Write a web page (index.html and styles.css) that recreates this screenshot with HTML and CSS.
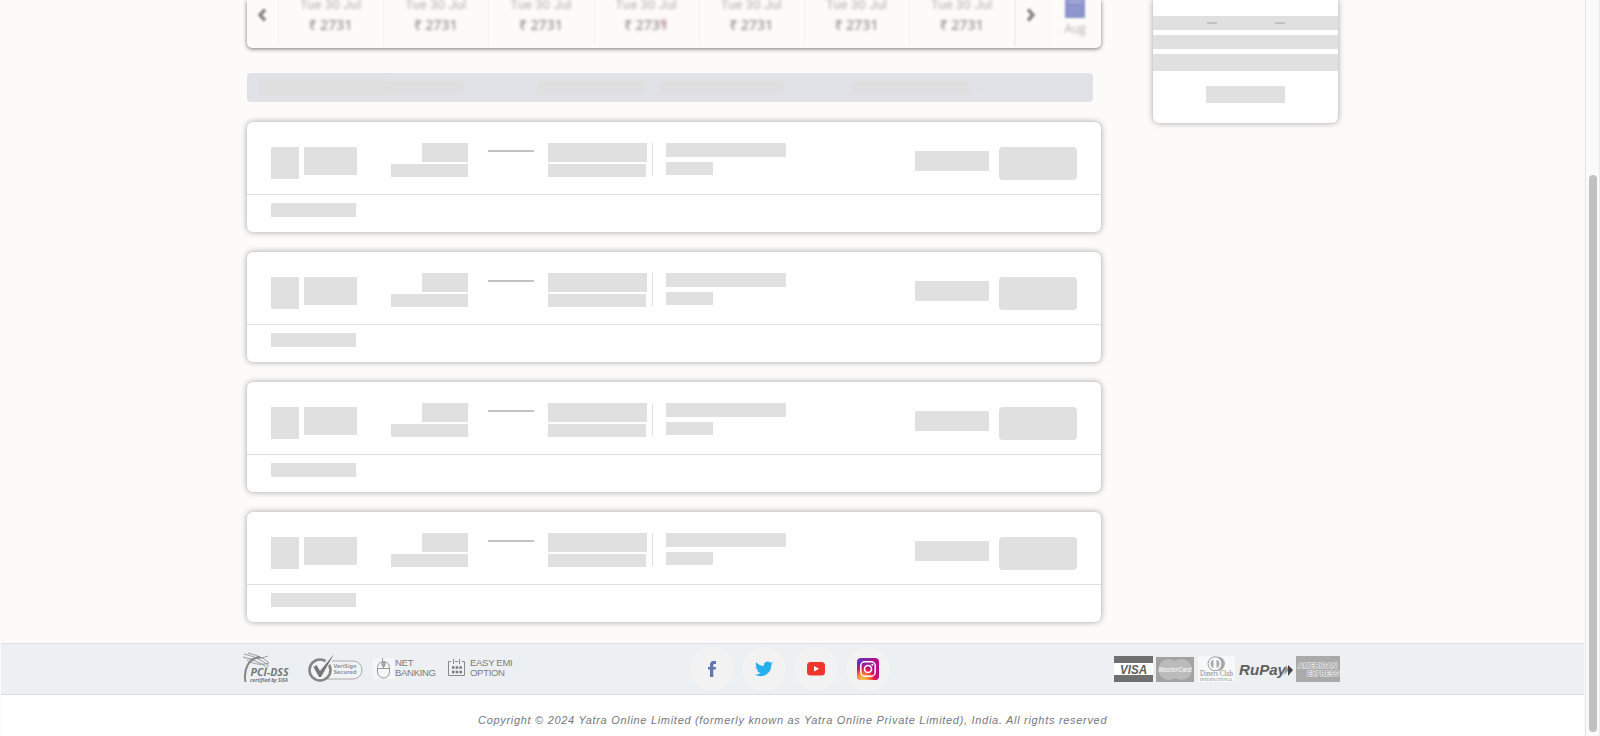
FILE: index.html
```html
<!DOCTYPE html>
<html lang="en">
<head>
<meta charset="utf-8">
<title>Yatra Flights</title>
<link rel="stylesheet" href="styles.css">
</head>
<body>
<div class="window">
  <div class="page">
    <div class="content">
      <main class="results">
        <section class="fares">
          <div class="arrow"><svg width="10" height="14" viewBox="0 0 10 14"><path d="M8 1.500 3 7l5 5.500" class="chev"/></svg></div>
          <div class="day"><span>Tue 30 Jul</span><b>₹ 2731</b></div>
          <div class="day"><span>Tue 30 Jul</span><b>₹ 2731</b></div>
          <div class="day"><span>Tue 30 Jul</span><b>₹ 2731</b></div>
          <div class="day low"><span>Tue 30 Jul</span><b>₹ 2731</b></div>
          <div class="day"><span>Tue 30 Jul</span><b>₹ 2731</b></div>
          <div class="day"><span>Tue 30 Jul</span><b>₹ 2731</b></div>
          <div class="day"><span>Tue 30 Jul</span><b>₹ 2731</b></div>
          <div class="arrow next"><svg width="10" height="14" viewBox="0 0 10 14"><path d="M2 1.500 7 7l-5 5.500" class="chev"/></svg></div>
          <div class="month"><svg width="20" height="22" viewBox="0 0 20 22"><path d="M0 3h20v19H0z" fill="#8c94cc"/><path d="M4 0v6M16 0v6" stroke="#8c94cc" stroke-width="3"/><path d="M3 6h14" stroke="#b4b9de" stroke-width="1.500"/><path d="M4 12h12M4 16h12" stroke="#959bd0" stroke-width="1.500"/></svg><span>Aug</span></div>
        </section>
        <section class="sort">
          <i class="s1"></i><i class="s2"></i><i class="s3"></i><i class="s4"></i><i class="s5"></i>
          <svg width="7" height="10" viewBox="0 0 7 10"><path d="M3.500 0v9M.5 6l3 3 3-3" fill="none" stroke="#dcdde0"/></svg>
        </section>
        <div class="cards">
          <article class="card">
            <div class="top"><i class="logo"></i><i class="name"></i><div class="dep"><i></i><i></i></div><i class="path"></i><div class="arr"><i></i><i></i></div><i class="rule"></i><div class="info"><i></i><i></i></div><i class="price"></i><i class="book"></i></div>
            <div class="bottom"><i></i></div>
          </article>
          <article class="card">
            <div class="top"><i class="logo"></i><i class="name"></i><div class="dep"><i></i><i></i></div><i class="path"></i><div class="arr"><i></i><i></i></div><i class="rule"></i><div class="info"><i></i><i></i></div><i class="price"></i><i class="book"></i></div>
            <div class="bottom"><i></i></div>
          </article>
          <article class="card">
            <div class="top"><i class="logo"></i><i class="name"></i><div class="dep"><i></i><i></i></div><i class="path"></i><div class="arr"><i></i><i></i></div><i class="rule"></i><div class="info"><i></i><i></i></div><i class="price"></i><i class="book"></i></div>
            <div class="bottom"><i></i></div>
          </article>
          <article class="card">
            <div class="top"><i class="logo"></i><i class="name"></i><div class="dep"><i></i><i></i></div><i class="path"></i><div class="arr"><i></i><i></i></div><i class="rule"></i><div class="info"><i></i><i></i></div><i class="price"></i><i class="book"></i></div>
            <div class="bottom"><i></i></div>
          </article>
        </div>
      </main>
      <aside class="side">
        <div class="row dashes"><i></i><i></i></div>
        <div class="row"></div>
        <div class="row tall"></div>
        <div class="button"></div>
      </aside>
    </div>
    <footer class="footer">
      <div class="trust">
        <svg class="pci" width="47" height="34" viewBox="0 0 47 34">
          <g fill="none" stroke="#868686"><path d="M2.500 30C0 17 6 6 17 5" stroke-width="2"/><path d="M1 2c9 2 18 6 25 12M0 5c9 2 18 6 25 11M5 1c8 2 16 5 21 10M4 8c7 5 16 5 22 3M6 7c8 0 14-1 19-3" stroke-width=".8"/></g>
          <text x="7.500" y="23.500" class="svgt bi" font-size="10" textLength="38" lengthAdjust="spacingAndGlyphs">PCI-DSS</text>
          <text x="7" y="30" class="svgt bi" font-size="5" textLength="38" lengthAdjust="spacingAndGlyphs">certified by SISA</text>
        </svg>
        <svg class="veri" width="56" height="30" viewBox="0 0 56 30">
          <path d="M20 8h25a8.500 8.500 0 0 1 0 18H19" fill="#f1f3f5" stroke="#aaa"/>
          <circle cx="12" cy="17" r="10.500" fill="#f3f4f5" stroke="#858585" stroke-width="2.600"/>
          <path d="m6.500 13 5 8L25 2" fill="none" stroke="#eef1f4" stroke-width="5"/><path d="M5.500 14 8.500 12l3.500 6L26 1 13 24h-2z" fill="#777"/>
          <text x="25.500" y="15" class="svgt vb" font-size="5.500" textLength="23" lengthAdjust="spacingAndGlyphs">VeriSign</text>
          <text x="25.500" y="20.500" class="svgt vb" font-size="5.500" textLength="23" lengthAdjust="spacingAndGlyphs">Secured</text>
        </svg>
        <svg class="mouse" width="21" height="21" viewBox="0 0 21 21"><path d="M0 0h21v21H0z" fill="#f4f6f7"/><g fill="none" stroke="#999"><rect x="4.500" y="3.500" width="12" height="16.500" rx="6"/><path d="M4.500 10.500h12M10.500 4v6M9.500 0v3"/><rect x="9" y="3.500" width="3" height="5" rx="1.500" fill="#aaa"/></g></svg>
        <span class="label net">NET<br>BANKING</span>
        <svg class="emi" width="18" height="19" viewBox="0 0 18 19"><path d="M3 3.500H.5v14h16v-14H14M5.500 1v5M11.500 1v5M7 3.500h3" fill="none" stroke="#888"/><path d="M4 9.500h10M4 14h10" stroke="#777" stroke-width="2.500" stroke-dasharray="2.500 1.200"/></svg>
        <span class="label">EASY EMI<br>OPTION</span>
      </div>
      <div class="social">
        <span><svg width="8" height="16" viewBox="0 0 8 16"><path d="M2 16V8.500H0V6h2V4Q2 0 5.500 0H8v3H6.500Q5.300 3 5.300 4V6H8l-.4 2.500H5.300V16z" fill="#6078ad"/></svg></span>
        <span><svg width="18" height="16" viewBox="0 0 24 20"><path d="M24 2.300c-.9.400-1.800.7-2.800.8 1-.6 1.800-1.600 2.200-2.700-1 .6-2 1-3.100 1.200A4.900 4.900 0 0 0 11.900 6C7.800 5.900 4.200 3.900 1.700.9.400 3.100 1 6 3.200 7.500 2.400 7.400 1.600 7.200 1 6.800c0 2.300 1.600 4.400 3.900 4.900-.7.200-1.500.2-2.200.1.600 2 2.400 3.400 4.600 3.400A9.900 9.900 0 0 1 0 17.200 14 14 0 0 0 21.500 4.800c1-.7 1.800-1.600 2.500-2.500z" fill="#27aeed"/></svg></span>
        <span><svg width="18" height="14" viewBox="0 0 18 14"><rect width="18" height="13.500" rx="3.500" fill="#f0352c"/><path d="m7 4 5 2.800-5 2.800z" fill="#fff"/></svg></span>
        <span><svg width="22" height="22" viewBox="0 0 22 22"><defs><linearGradient id="ig" x1="0" y1="0" x2="1" y2="0"><stop stop-color="#6133c0"/><stop offset="1" stop-color="#c10986"/></linearGradient><radialGradient id="ih" cx=".25" cy="1.050" r=".85"><stop stop-color="#ffd45b"/><stop offset=".35" stop-color="#fb8a35"/><stop offset=".65" stop-color="#e5164e"/><stop offset="1" stop-color="#c0087f" stop-opacity="0"/></radialGradient></defs><rect width="22" height="22" rx="4" fill="url(#ig)"/><rect width="22" height="22" rx="4" fill="url(#ih)"/><rect x="3.800" y="3.800" width="14.400" height="14.400" rx="4" fill="none" stroke="#fff" stroke-width="1.500"/><circle cx="11" cy="11" r="3.500" fill="none" stroke="#fff" stroke-width="1.600"/><circle cx="15.300" cy="6.700" r="1" fill="#fff"/></svg></span>
      </div>
      <div class="pay">
        <svg class="visa" width="39" height="26" viewBox="0 0 39 26"><path d="M0 0h39v26H0z" fill="#fff"/><path d="M0 0h39v7H0zM0 19h39v7H0z" fill="#707070"/><text x="6" y="17.500" class="svgt bi" font-size="12" textLength="27" lengthAdjust="spacingAndGlyphs">VISA</text></svg>
        <svg class="mc" width="38" height="25" viewBox="0 0 38 25"><path d="M0 0h38v25H0z" fill="#a2a2a2"/><circle cx="13" cy="12.500" r="10.500" fill="#bbb"/><circle cx="25.500" cy="12.500" r="10.500" fill="#bbb"/><text x="2.500" y="15" class="mct" font-size="7.500" textLength="33" lengthAdjust="spacingAndGlyphs">MasterCard</text></svg>
        <svg class="diners" width="37" height="26" viewBox="0 0 37 26"><path d="M0 0h37v26H0z" fill="#f7f8f9"/><circle cx="20" cy="7.800" r="7" fill="#aaa"/><circle cx="17" cy="7.800" r="7" fill="#f7f8f9" stroke="#999"/><path d="M15.500 3.500a4.600 4.600 0 0 0 0 8.600zM18.500 3.500a4.600 4.600 0 0 1 0 8.600z" fill="#aaa"/><text x="2" y="20" class="dc" font-size="7.500" textLength="33" lengthAdjust="spacingAndGlyphs">Diners Club</text><text x="2" y="25" class="dc" font-size="4.500" textLength="33" lengthAdjust="spacingAndGlyphs">INTERNATIONAL</text></svg>
        <svg class="rupay" width="56" height="26" viewBox="0 0 56 26"><text x="0" y="18.500" class="svgt bi ru" font-size="14" textLength="47" lengthAdjust="spacingAndGlyphs">RuPay</text><path d="m47 9 3 5-5 5z" fill="#999"/><path d="m49 9 5 5-5 6z" fill="#444"/></svg>
        <svg class="amex" width="44" height="26" viewBox="0 0 44 26"><path d="M0 0h44v26H0z" fill="#aaa"/><text x="2" y="11.500" class="am" font-size="7" textLength="39" lengthAdjust="spacingAndGlyphs">AMERICAN</text><text x="11" y="19.500" class="am" font-size="7" textLength="32" lengthAdjust="spacingAndGlyphs">EXPRESS</text></svg>
      </div>
    </footer>
    <div class="copyright"><em>Copyright © 2024 Yatra Online Limited (formerly known as Yatra Online Private Limited), India. All rights reserved</em></div>
  </div>
  <div class="scroll"><div class="thumb"></div></div>
</div>
</body>
</html>
```
FILE: styles.css
```css
* { box-sizing: border-box; }
body { margin: 0; font-family: "Liberation Sans", Arial, sans-serif; background: #fcfbf9; }
i { display: block; background: #e0e0e0; flex: none; }
svg { display: block; flex: none; }
.window { display: flex; width: 1600px; height: 736px; overflow: hidden; }
.page { width: 1585px; padding: 0 1px; display: flex; flex-direction: column; }
.content { height: 643px; flex: none; display: flex; align-items: flex-start; gap: 52px; padding-left: 246px; }
.results { width: 854px; }

.fares { height: 48px; display: flex; border-radius: 0 0 5px 5px; box-shadow: 0 1px 4px #777; background: #fcfbf9; }
.arrow { width: 31px; height: 46px; padding: 8px 0 0 10px; }
.arrow svg { filter: blur(1px); }
.chev { fill: none; stroke: #858585; stroke-width: 3.4; }
.day { width: 105.200px; height: 46px; border-left: 1px solid #f2f1f0; padding-right: 1px; display: flex; flex-direction: column; align-items: center; }
.day span, .day b { filter: blur(1.4px); white-space: nowrap; }
.day span { margin-top: -4px; font: 13px/18px Roboto, "Open Sans", sans-serif; letter-spacing: .15px; color: #b2b2b2; }
.day b { margin-top: 1px; font: 600 14px/20px "Open Sans", "Noto Sans", sans-serif; color: #9a9a9a; letter-spacing: .1px; word-spacing: -.5px; }
.low b { background: radial-gradient(circle 6px at 39px 8px, #f3c0c0, #fcfbf900); }
.next { border-left: 2px solid #f2f1f0; width: 35px; padding-left: 10px; }
.month { height: 46px; flex: 1; border-left: 1px solid #f7f6f5; padding-right: 1px; display: flex; flex-direction: column; align-items: center; font: 12px/16px "Open Sans", "Noto Sans", sans-serif; color: #b2b2b2; }
.month svg { margin-top: -4px; filter: blur(1px); }
.month span { margin-top: 3px; filter: blur(1.4px); }

.sort { width: 846px; height: 29px; margin-top: 25px; padding-left: 12px; border-radius: 4px; background: #e1e2e8; display: flex; align-items: center; }
.sort i { height: 13px; background: #dfdfdf; }
.sort .s1 { width: 128px; height: 17px; }
.s2 { width: 76px; margin-right: 75px; }
.s3 { width: 107px; margin-right: 15px; }
.s4 { width: 123px; margin-right: 69px; }
.s5 { width: 117px; margin-right: 6px; }

.cards { display: flex; flex-direction: column; gap: 20px; margin-top: 20px; }
.card { height: 110px; background: #fff; border-radius: 6px; box-shadow: 0 0 0 .5px #d2d2d2, 0 0 6px #a4a4a4; }
.top { height: 73px; border-bottom: 1px solid #dfdfdf; padding: 21px 24px 0; display: flex; align-items: flex-start; }
.logo { width: 28px; height: 32px; margin-top: 4px; }
.name { width: 53px; height: 28px; margin: 4px 34px 0 5px; }
.dep { width: 77px; display: flex; flex-direction: column; align-items: flex-end; gap: 2px; }
.dep i:first-child { width: 46px; height: 19px; }
.dep i:last-child { width: 77px; height: 13px; }
.path { width: 46px; height: 2px; margin: 7px 14px 0 20px; background: #c2c2c2; }
.arr { width: 99px; display: flex; flex-direction: column; gap: 2px; }
.arr i:first-child { height: 19px; }
.arr i:last-child { width: 98px; height: 13px; }
.rule { width: 1px; height: 33px; margin: 0 13px 0 5px; }
.info { width: 120px; display: flex; flex-direction: column; gap: 5px; }
.info i:first-child { height: 14px; }
.info i:last-child { width: 47px; height: 13px; }
.price { width: 74px; height: 20px; margin: 8px 10px 0 auto; }
.book { width: 78px; height: 33px; margin-top: 4px; border-radius: 4px; }
.bottom { padding: 8px 24px; }
.bottom i { width: 85px; height: 14px; }

.side { width: 185px; height: 123px; padding-top: 16px; background: #fff; border-radius: 0 0 6px 6px; box-shadow: 0 0 0 .5px #d2d2d2, 0 0 6px #a4a4a4; }
.row { height: 14px; background: #e0e0e0; margin-bottom: 5px; }
.tall { height: 17px; margin-bottom: 15px; }
.dashes { display: flex; gap: 58px; padding: 6px 0 0 54px; }
.dashes i { width: 10px; height: 2px; background: #c2c2c2; }
.button { width: 79px; height: 17px; margin-left: 53px; background: #e0e0e0; }

.footer { height: 52px; flex: none; border-top: 1px solid #dcdfe3; border-bottom: 1px solid #dadee4; background: #ecf0f3; display: flex; }
.trust { flex: none; width: 689px; padding-left: 242px; display: flex; }
.svgt { font-family: "Open Sans", "Noto Sans", sans-serif; fill: #777; }
.bi { font-weight: 700; font-style: italic; }
.vb { font-family: "DejaVu Sans", sans-serif; font-weight: 700; fill: #999; }
.pci { margin-top: 8px; }
.veri { margin: 9px 0 0 18px; }
.mouse { margin: 14px 1px 0 9px; }
.label { font-size: 10px; line-height: 10px; letter-spacing: -.55px; color: #7d7d7d; margin-top: 14px; white-space: nowrap; }
.label { font-size: 9.600px; letter-spacing: -.35px; }
.net { width: 53px; }
.emi { margin: 14px 4px 0 0; }
.social { display: flex; gap: 8px; padding-top: 3px; width: 424px; }
.social span { width: 44px; height: 44px; border-radius: 50%; background: #f2f2f2; display: flex; align-items: center; justify-content: center; }
.pay { display: flex; align-items: flex-start; padding-top: 12px; }
.visa text { fill: #5c5c5c; font-family: "Liberation Sans", sans-serif; }
.mc { margin: 1px 4px 0 3px; }
.rupay { margin: 0 1px 0 4px; }
.mct { font-family: "Liberation Sans", sans-serif; font-weight: 700; font-style: italic; fill: #eee; }
.dc { font-family: "Liberation Serif", serif; fill: #888; }
.ru { font-family: "Liberation Sans", sans-serif; fill: #606060; }
.am { font-family: "Liberation Sans", sans-serif; font-weight: 700; fill: #aaa; stroke: #e8e8e8; stroke-width: 1.2px; paint-order: stroke; }
.copyright { flex: 1; background: #fff; color: #77777f; font-size: 11px; line-height: 14px; padding: 18px 0 0 477px; letter-spacing: .697px; white-space: nowrap; }

.scroll { width: 15px; border-left: 1px solid #e4e4e4; border-right: 1px solid #ececec; background: #fafafa; padding: 175px 0 0 3px; }
.thumb { width: 8px; height: 557px; border-radius: 4px; background: #c1c1c1; }
```
